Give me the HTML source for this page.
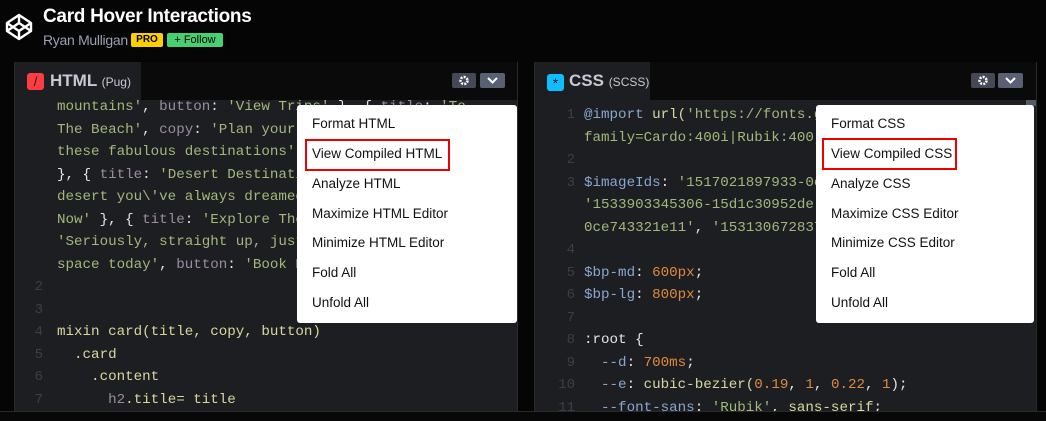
<!DOCTYPE html>
<html><head><meta charset="utf-8"><style>
*{margin:0;padding:0;box-sizing:border-box}
body{width:1046px;height:421px;background:#050505;position:relative;overflow:hidden;font-family:"Liberation Sans",sans-serif}
.abs{position:absolute}
.code{font-family:"Liberation Mono",monospace;font-size:14.2px;white-space:pre;color:#cfcfc2;line-height:22.5px}
.ln{font-family:"Liberation Mono",monospace;font-size:14px;color:#3c3e44;line-height:22.5px;text-align:right;width:20px}
.s{color:#a3b87a}.k{color:#9a8d9f}.w{color:#e6e6e6}.y{color:#d8d89c}.b{color:#88a7cf}.o{color:#e08a3e}.t{color:#c8c896}
.menu{background:#fff;border-radius:3px}
.menu div{position:absolute;left:15px;font-size:13.5px;color:#111;white-space:nowrap}
.btn{background:#444857;border-radius:2px;height:15px}
</style></head><body>
<!-- header -->
<svg class="abs" style="left:5px;top:13px" width="28" height="28" viewBox="0 0 28 28" fill="none" stroke="#fff" stroke-width="2.4" stroke-linejoin="round"><path d="M14 2 L26 10 L26 18 L14 26 L2 18 L2 10 Z M2 10 L14 18 L26 10 M2 18 L14 10 L26 18 M14 2 V10 M14 18 V26"/></svg>
<div class="abs" style="left:43px;top:6px;font-size:19px;font-weight:bold;color:#fff;letter-spacing:-0.3px">Card Hover Interactions</div>
<div class="abs" style="left:43px;top:32px;font-size:14px;color:#9aa0b0;letter-spacing:-0.3px">Ryan Mulligan</div>
<div class="abs" style="left:131px;top:33px;width:32px;height:14px;background:#fcd000;border-radius:2px;font-size:10px;font-weight:bold;color:#000;text-align:center;line-height:14px">PRO</div>
<div class="abs" style="left:167px;top:33px;width:56px;height:14px;background:#47cf73;border-radius:2px;font-size:11px;color:#000;text-align:center;line-height:14px">+ Follow</div>
<!-- left panel -->
<div class="abs" style="left:14px;top:62px;width:504px;height:349px;background:#0a0a0a;border-left:1px solid #2a2a2a;border-right:1px solid #2a2a2a"></div>
<div class="abs" style="left:15px;top:62px;width:126px;height:38px;background:#1d1e22"></div>
<div class="abs" style="left:15px;top:100px;width:502px;height:311px;background:#1d1e22"></div>
<div class="abs" style="left:27px;top:73px;width:17px;height:17px;background:#ff3c41;border-radius:3px;color:#1d1e22;font-size:13px;text-align:center;line-height:17px">/</div>
<div class="abs" style="left:50px;top:71px;font-size:17px;font-weight:bold;color:#c7c9d3">HTML <span style="font-size:12px;font-weight:normal">(Pug)</span></div>
<div class="abs btn" style="left:452px;top:73px;width:24px"><svg width="24" height="15"><circle cx="12" cy="7.5" r="3.5" fill="none" stroke="#fff" stroke-width="2.5" stroke-dasharray="2 1.2"/></svg></div>
<div class="abs btn" style="left:480px;top:73px;width:25px;background:#5a5f73"><svg width="25" height="15"><path d="M8 5 L12.5 9.5 L17 5" fill="none" stroke="#fff" stroke-width="2"/></svg></div>
<div class="abs ln" style="left:23px;top:96px"><br><br><br><br><br><br><br><br>2<br>3<br>4<br>5<br>6<br>7</div>
<div class="abs code" style="left:57px;top:96px"><span class="s">mountains'</span><span class="w">,</span> <span class="k">button</span><span class="w">:</span> <span class="s">'View Trips'</span> <span class="w">}, {</span> <span class="k">title</span><span class="w">:</span> <span class="s">'To</span>
<span class="s">The Beach'</span><span class="w">,</span> <span class="k">copy</span><span class="w">:</span> <span class="s">'Plan your</span>
<span class="s">these fabulous destinations'</span><span class="w">,</span>
<span class="w">}, {</span> <span class="k">title</span><span class="w">:</span> <span class="s">'Desert Destinati</span>
<span class="s">desert you\'ve always dreamed</span>
<span class="s">Now'</span> <span class="w">}, {</span> <span class="k">title</span><span class="w">:</span> <span class="s">'Explore The</span>
<span class="s">'Seriously, straight up, just</span>
<span class="s">space today'</span><span class="w">,</span> <span class="k">button</span><span class="w">:</span> <span class="s">'Book N</span>


<span class="y">mixin card(title, copy, button)</span>
<span class="y">  .card</span>
<span class="y">    .content</span>
<span class="y">      </span><span class="k">h2</span><span class="y">.title= title</span></div>
<div class="abs menu" style="left:297px;top:105px;width:220px;height:218px">
<div style="top:11px">Format HTML</div>
<div style="top:41px">View Compiled HTML</div>
<div style="top:71px">Analyze HTML</div>
<div style="top:101px">Maximize HTML Editor</div>
<div style="top:130px">Minimize HTML Editor</div>
<div style="top:160px">Fold All</div>
<div style="top:190px">Unfold All</div>
</div>
<div class="abs" style="left:305px;top:139px;width:145px;height:32px;border:2px solid #e00"></div>
<!-- right panel -->
<div class="abs" style="left:534px;top:62px;width:503px;height:349px;background:#0a0a0a;border-left:1px solid #2a2a2a;border-right:1px solid #2a2a2a"></div>
<div class="abs" style="left:535px;top:62px;width:115px;height:38px;background:#1d1e22"></div>
<div class="abs" style="left:535px;top:100px;width:501px;height:311px;background:#1d1e22"></div>
<div class="abs" style="left:1026px;top:100px;width:10px;height:6px;background:#555a66"></div>
<div class="abs" style="left:547px;top:74px;width:17px;height:17px;background:#0ebeff;border-radius:3px;color:#111;font-size:14px;text-align:center;line-height:19px">*</div>
<div class="abs" style="left:569px;top:71px;font-size:17px;font-weight:bold;color:#c7c9d3">CSS <span style="font-size:12px;font-weight:normal">(SCSS)</span></div>
<div class="abs btn" style="left:971px;top:73px;width:24px"><svg width="24" height="15"><circle cx="12" cy="7.5" r="3.5" fill="none" stroke="#fff" stroke-width="2.5" stroke-dasharray="2 1.2"/></svg></div>
<div class="abs btn" style="left:998px;top:73px;width:25px;background:#5a5f73"><svg width="25" height="15"><path d="M8 5 L12.5 9.5 L17 5" fill="none" stroke="#fff" stroke-width="2"/></svg></div>
<div class="abs ln" style="left:555px;top:104px">1<br><br>2<br>3<br><br><br>4<br>5<br>6<br>7<br>8<br>9<br>10<br>11</div>
<div class="abs code" style="left:584px;top:104px"><span class="b">@import</span> <span class="y">url(</span><span class="s">'https://fonts.go</span>
<span class="s">family=Cardo:400i|Rubik:400,7</span>

<span class="b">$imageIds</span><span class="w">:</span> <span class="s">'1517021897933-0e0</span>
<span class="s">'1533903345306-15d1c30952de'</span>
<span class="s">0ce743321e11'</span><span class="w">,</span> <span class="s">'15313067283706</span>

<span class="b">$bp-md</span><span class="w">:</span> <span class="o">600px</span><span class="w">;</span>
<span class="b">$bp-lg</span><span class="w">:</span> <span class="o">800px</span><span class="w">;</span>

<span class="w">:root {</span>
<span class="b">  --d</span><span class="w">:</span> <span class="o">700ms</span><span class="w">;</span>
<span class="b">  --e</span><span class="w">:</span> <span class="y">cubic-bezier(</span><span class="o">0.19</span><span class="w">,</span> <span class="o">1</span><span class="w">,</span> <span class="o">0.22</span><span class="w">,</span> <span class="o">1</span><span class="w">);</span>
<span class="b">  --font-sans</span><span class="w">:</span> <span class="s">'Rubik'</span><span class="w">,</span> <span class="y">sans-serif</span><span class="w">;</span></div>
<div class="abs menu" style="left:816px;top:105px;width:218px;height:218px">
<div style="top:11px">Format CSS</div>
<div style="top:41px">View Compiled CSS</div>
<div style="top:71px">Analyze CSS</div>
<div style="top:101px">Maximize CSS Editor</div>
<div style="top:130px">Minimize CSS Editor</div>
<div style="top:160px">Fold All</div>
<div style="top:190px">Unfold All</div>
</div>
<div class="abs" style="left:822px;top:138px;width:135px;height:32px;border:2px solid #e00"></div>
<div class="abs" style="left:0;top:411px;width:1046px;height:10px;background:#080808;border-top:1px solid #2a2a2a"></div>
</body></html>
